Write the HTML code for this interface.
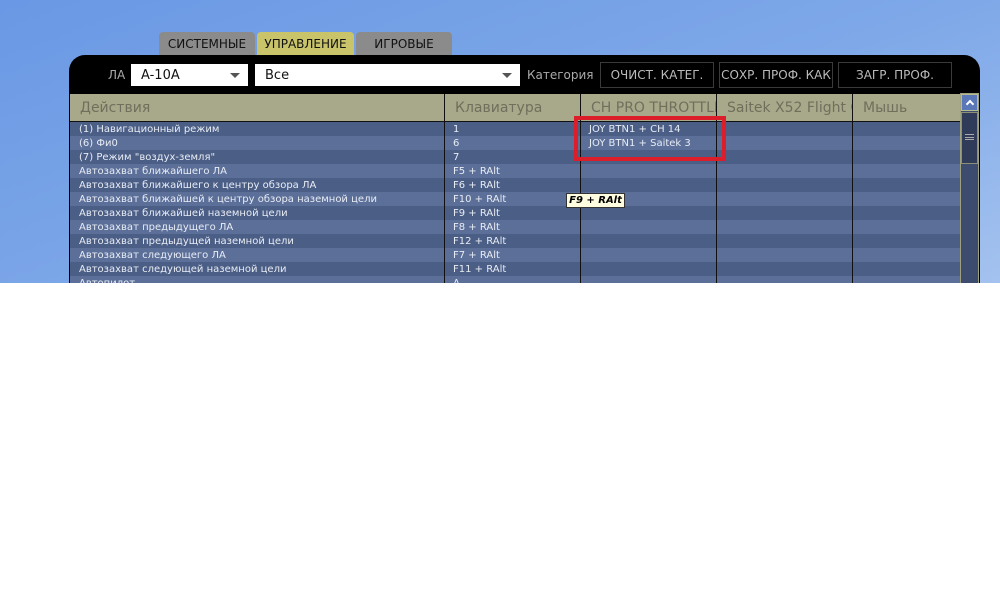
<!DOCTYPE html>
<html><head><meta charset="utf-8"><style>
*{margin:0;padding:0;box-sizing:border-box}
body{width:1000px;height:589px;background:#fff;position:relative;overflow:hidden;font-family:"DejaVu Sans","Liberation Sans",sans-serif}
#top{position:absolute;left:0;top:0;width:1000px;height:283px;overflow:hidden;background:linear-gradient(160deg,#6a98e4 0%,#7ea8e8 55%,#a4c2ef 100%)}
.a{position:absolute}
.tab{position:absolute;top:32px;height:24px;font-size:12px;color:#111;text-align:center;line-height:25px;border-radius:4px 4px 0 0;background:#8b8b8b}
#panel{position:absolute;left:69px;top:55px;width:911px;height:240px;background:#000;border-radius:16px 16px 0 0}
.inp{position:absolute;top:64px;height:22px;background:#fff;font-size:13px;line-height:23px;padding-left:10px;color:#111}
.dd{position:absolute;right:8px;top:9px;width:0;height:0;border-left:5px solid transparent;border-right:5px solid transparent;border-top:5px solid #555}
.btn{position:absolute;top:62px;height:26px;border:1px solid #3a3a3a;color:#bbb;font-size:12px;text-align:center;line-height:25px}
.hd{position:absolute;top:94px;height:27px;background:#a8a98a;font-size:14px;color:#6f6f5c;line-height:29px;padding-left:10px;white-space:nowrap;overflow:hidden}
.row{position:absolute;left:70px;width:890px;height:14px}
.t{position:absolute;font-size:10px;color:#e8ecf4;line-height:15px;white-space:nowrap}
.vl{position:absolute;top:94px;width:1px;height:200px;background:#111}
</style></head><body>
<div id="top">
<div class="tab" style="left:159px;width:96px">СИСТЕМНЫЕ</div>
<div class="tab" style="left:257px;width:97px;background:#c9c46a">УПРАВЛЕНИЕ</div>
<div class="tab" style="left:356px;width:96px">ИГРОВЫЕ</div>
<div id="panel"></div>
<div class="a" style="left:108px;top:68px;font-size:12px;color:#aaa">ЛА</div>
<div class="inp" style="left:131px;width:117px">A-10A<div class="dd"></div></div>
<div class="inp" style="left:255px;width:265px">Все<div class="dd"></div></div>
<div class="a" style="left:527px;top:68px;font-size:12px;color:#aaa">Категория</div>
<div class="btn" style="left:600px;width:114px">ОЧИСТ. КАТЕГ.</div>
<div class="btn" style="left:719px;width:114px">СОХР. ПРОФ. КАК</div>
<div class="btn" style="left:838px;width:114px">ЗАГР. ПРОФ.</div>
<div class="hd" style="left:70px;width:374px">Действия</div>
<div class="hd" style="left:445px;width:135px">Клавиатура</div>
<div class="hd" style="left:581px;width:135px">CH PRO THROTTLE</div>
<div class="hd" style="left:717px;width:135px">Saitek X52 Flight C</div>
<div class="hd" style="left:853px;width:107px">Мышь</div>
<div class="a" style="left:70px;top:121px;width:890px;height:1px;background:#111"></div>
<div id="rows"></div>
<div class="vl" style="left:444px"></div>
<div class="vl" style="left:580px"></div>
<div class="vl" style="left:716px"></div>
<div class="vl" style="left:852px"></div>
<div class="a" style="left:960px;top:93px;width:19px;height:200px;background:#3d4c6e;border:1px solid #9ea07e"></div>
<div class="a" style="left:961px;top:94px;width:17px;height:17px;background:#5a78b8;border:1px solid #b8ba90"><div style="position:absolute;left:5px;top:6px;width:6px;height:6px;border-left:2px solid #fff;border-top:2px solid #fff;transform:rotate(45deg)"></div></div>
<div class="a" style="left:961px;top:112px;width:17px;height:52px;background:#2f3b58;border:1px solid #8e9076"></div>
<div class="a" style="left:965px;top:134px;width:9px;height:6px;border-top:1px solid #aaa;border-bottom:1px solid #aaa"><div style="margin-top:2px;height:1px;background:#aaa"></div></div>
<div class="a" style="left:574px;top:116px;width:152px;height:45px;border:4px solid #dc1e2a"></div>
<div class="a" style="left:566px;top:193px;width:59px;height:15px;background:#fffde0;border:1px solid #333;font-size:10px;font-weight:bold;font-style:italic;color:#000;line-height:13px;text-align:center">F9 + RAlt</div>
</div>
<script>
var d=[["(1) Навигационный режим","1","JOY&nbsp;BTN1 + CH&nbsp;14"],["(6) Фи0","6","JOY&nbsp;BTN1 + Saitek&nbsp;3"],["(7) Режим \"воздух-земля\"","7",""],["Автозахват ближайшего ЛА","F5 + RAlt",""],["Автозахват ближайшего к центру обзора ЛА","F6 + RAlt",""],["Автозахват ближайшей к центру обзора наземной цели","F10 + RAlt",""],["Автозахват ближайшей наземной цели","F9 + RAlt",""],["Автозахват предыдущего ЛА","F8 + RAlt",""],["Автозахват предыдущей наземной цели","F12 + RAlt",""],["Автозахват следующего ЛА","F7 + RAlt",""],["Автозахват следующей наземной цели","F11 + RAlt",""],["Автопилот","A",""]];
var h="";d.forEach(function(r,i){var y=122+i*14;h+='<div class="row" style="top:'+y+'px;background:'+(i%2?'#5b6f99':'#4b5e86')+'"></div><div class="t" style="left:79px;top:'+y+'px">'+r[0]+'</div><div class="t" style="left:453px;top:'+y+'px">'+r[1]+'</div><div class="t" style="left:589px;top:'+y+'px">'+r[2]+'</div>';});
document.getElementById("rows").outerHTML=h;
</script>
</body></html>
